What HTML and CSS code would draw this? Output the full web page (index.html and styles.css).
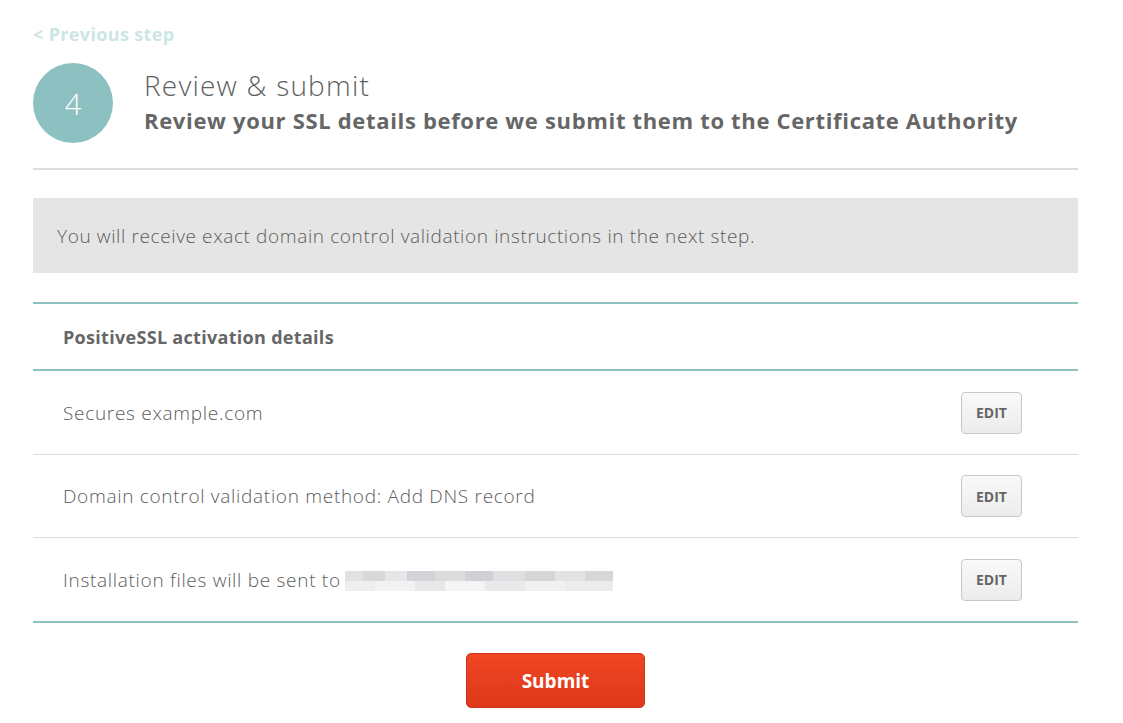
FILE: index.html
```html
<!DOCTYPE html>
<html lang="en">

<head>
    <meta charset="UTF-8">
    <meta name="viewport" content="width=device-width, initial-scale=1.0">
    <title>Review &amp; submit</title>
    <link rel="stylesheet" href="styles.css">
</head>

<body>
    <main class="page">
        <a class="back-link" href="#">&lt; Previous step</a>

        <div class="step-head">
            <div class="step-number">4</div>
            <div class="step-titles">
                <h1>Review &amp; submit</h1>
                <h2>Review your SSL details before we submit them to the Certificate Authority</h2>
            </div>
        </div>

        <hr class="divider">

        <div class="notice">You will receive exact domain control validation instructions in the next step.</div>

        <section class="details">
            <div class="details-head">PositiveSSL activation details</div>
            <div class="details-row">
                <span>Secures example.com</span>
                <button type="button" class="edit-btn">EDIT</button>
            </div>
            <div class="details-row">
                <span>Domain control validation method: Add DNS record</span>
                <button type="button" class="edit-btn">EDIT</button>
            </div>
            <div class="details-row">
                <span>Installation files will be sent to <span class="blurred"></span></span>
                <button type="button" class="edit-btn">EDIT</button>
            </div>
        </section>

        <div class="actions">
            <button type="button" class="submit-btn">Submit</button>
        </div>
    </main>
</body>

</html>
```

FILE: styles.css
```css
body {
    font-family: "Open Sans", Arial, sans-serif;
    margin: 0;
    padding: 0;
    background-color: #fff;
    color: #666;
}

.page {
    width: 1045px;
    padding: 22px 0 0 33px;
}

.back-link {
    display: block;
    color: #cbe6e4;
    font-weight: bold;
    font-size: 18px;
    letter-spacing: 0.35px;
    line-height: 24px;
    text-decoration: none;
}

.step-head {
    display: flex;
    align-items: center;
    gap: 31px;
    margin-top: 17px;
}

.step-number {
    width: 80px;
    height: 80px;
    border-radius: 50%;
    background-color: #8dc0c0;
    color: #fff;
    font-size: 29px;
    font-weight: 300;
    display: flex;
    align-items: center;
    justify-content: center;
    flex-shrink: 0;
}

.step-titles {
    margin-top: -2px;
}

.step-titles h1 {
    margin: 0;
    font-size: 28px;
    font-weight: 300;
    letter-spacing: 1.2px;
    line-height: 34px;
    color: #5f5f5f;
}

.step-titles h2 {
    margin: 2px 0 0;
    font-size: 22px;
    font-weight: bold;
    letter-spacing: 0.67px;
    line-height: 32px;
    color: #666;
}

.divider {
    border: none;
    border-top: 2px solid #dedede;
    margin: 25px 0 28px;
}

.notice {
    background-color: #e5e5e5;
    height: 75px;
    padding: 0 24px;
    display: flex;
    align-items: center;
    font-size: 19px;
    font-weight: 300;
    letter-spacing: 0.62px;
    color: #5c5c5c;
}

.details {
    margin-top: 29px;
    border-top: 2px solid #8cc3c0;
    border-bottom: 2px solid #8cc3c0;
}

.details-head {
    height: 65px;
    padding-left: 30px;
    display: flex;
    align-items: center;
    font-weight: bold;
    font-size: 18px;
    letter-spacing: 0.3px;
    border-bottom: 2px solid #8cc3c0;
}

.details-row {
    box-sizing: border-box;
    height: 83px;
    padding: 0 56px 0 30px;
    display: flex;
    align-items: center;
    justify-content: space-between;
    font-size: 19px;
    font-weight: 300;
    letter-spacing: 0.7px;
    color: #5c5c5c;
    border-top: 1px solid #ddd;
}

.details-head + .details-row {
    border-top: none;
}

.details-row:last-child {
    height: 84px;
}

.blurred {
    display: inline-block;
    width: 268px;
    height: 20px;
    margin-left: -1px;
    vertical-align: -4px;
    background:
        linear-gradient(90deg, #e2e2e4 0 18px, #d8d8db 18px 40px, #e6e6e8 40px 62px, #d3d4d8 62px 90px, #dcdcdc 90px 120px, #d0d1d5 120px 148px, #e0e0e2 148px 180px, #d6d5d7 180px 210px, #e3e3e3 210px 240px, #d7d7d9 240px 268px) top / 100% 10px no-repeat,
        linear-gradient(90deg, #eeeeef 0 30px, #f2f2f2 30px 70px, #e8e8ea 70px 100px, #f4f4f4 100px 140px, #e9e9eb 140px 180px, #f1f1f1 180px 220px, #ececec 220px 268px) bottom / 100% 10px no-repeat;
}

.edit-btn {
    width: 61px;
    height: 42px;
    border: 1px solid #c8c8c8;
    border-radius: 4px;
    background: linear-gradient(#f9f9f9, #ececec);
    color: #666;
    font-family: "Open Sans", Arial, sans-serif;
    font-weight: bold;
    font-size: 14px;
    letter-spacing: 0;
    cursor: pointer;
}

.actions {
    display: flex;
    justify-content: center;
    margin-top: 30px;
}

.submit-btn {
    width: 179px;
    height: 55px;
    border: 1px solid #c9341a;
    border-radius: 5px;
    background: linear-gradient(#ef4624, #de3819);
    color: #fff;
    font-family: "Open Sans", Arial, sans-serif;
    font-weight: bold;
    font-size: 19px;
    cursor: pointer;
}
```
